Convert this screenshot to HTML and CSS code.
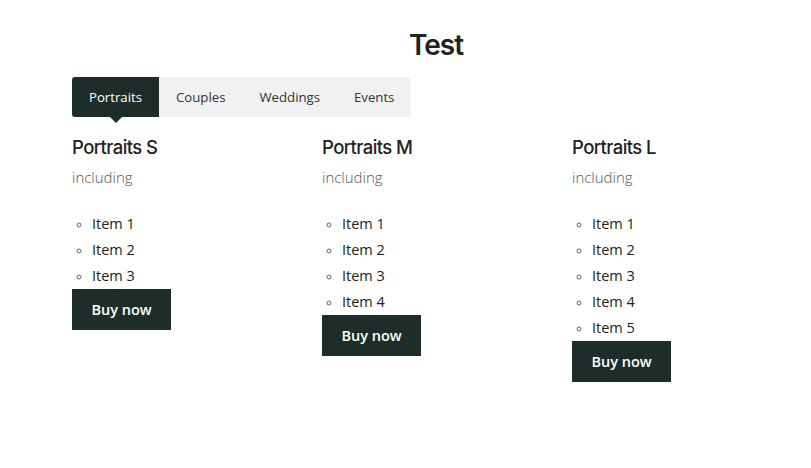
FILE: index.html
```html
<!DOCTYPE html>
<html lang="en">
<head>
  <meta charset="UTF-8" />
  <meta name="viewport" content="width=device-width, initial-scale=1.0"/>
  <title>Test</title>
  <link rel="stylesheet" href="styles.css">
</head>
<body>

  <div class="page">
    <h1 class="title">Test</h1>

    <!-- Tabs -->
    <div class="tabs">
      <a href="#" class="tab active">Portraits</a>
      <a href="#" class="tab">Couples</a>
      <a href="#" class="tab">Weddings</a>
      <a href="#" class="tab">Events</a>
    </div>

    <!-- Packages -->
    <div class="packages">
      <div class="package">
        <h2>Portraits S</h2>
        <p class="sub">including</p>
        <ul>
          <li>Item 1</li>
          <li>Item 2</li>
          <li>Item 3</li>
        </ul>
        <a href="#" class="buy-btn">Buy now</a>
      </div>

      <div class="package">
        <h2>Portraits M</h2>
        <p class="sub">including</p>
        <ul>
          <li>Item 1</li>
          <li>Item 2</li>
          <li>Item 3</li>
          <li>Item 4</li>
        </ul>
        <a href="#" class="buy-btn">Buy now</a>
      </div>

      <div class="package">
        <h2>Portraits L</h2>
        <p class="sub">including</p>
        <ul>
          <li>Item 1</li>
          <li>Item 2</li>
          <li>Item 3</li>
          <li>Item 4</li>
          <li>Item 5</li>
        </ul>
        <a href="#" class="buy-btn">Buy now</a>
      </div>
    </div>
  </div>

</body>
</html>
```

FILE: styles.css
```css
body {
  margin: 0;
  font-family: "Open Sans", Arial, sans-serif;
  background-color: #fff;
  color: #222;
}

.page {
  padding: 0 11px 0 72px;
}

.title {
  margin: 0;
  padding-top: 27px;
  text-align: center;
  font-family: Inter, Lato, sans-serif;
  font-size: 28px;
  font-weight: 600;
  line-height: 36px;
  color: #222;
  letter-spacing: -1px;
}

.tabs {
  display: inline-flex;
  margin-top: 14px;
  background-color: #f1f1f1;
  border-radius: 3px;
}

.tab {
  position: relative;
  display: block;
  padding: 0 17px;
  height: 40px;
  line-height: 40px;
  font-size: 13.2px;
  color: #333;
  text-decoration: none;
}

.tab.active {
  background-color: #1d2e2a;
  color: #fff;
  border-radius: 3px 0 0 3px;
}

.tab.active::after {
  content: "";
  position: absolute;
  left: 50%;
  bottom: -6px;
  margin-left: -6px;
  border-left: 6px solid transparent;
  border-right: 6px solid transparent;
  border-top: 6px solid #1d2e2a;
}

.packages {
  display: grid;
  grid-template-columns: 250px 250px 250px;
  margin-top: 17px;
}

.package h2 {
  margin: 0;
  font-family: Inter, Lato, sans-serif;
  font-size: 18.5px;
  font-weight: 500;
  line-height: 26px;
  letter-spacing: -0.6px;
  color: #222;
}

.sub {
  margin: 6px 0 0;
  font-size: 15px;
  font-weight: 300;
  color: #555;
  line-height: 22px;
}

.package ul {
  margin: 23px 0 0;
  padding-left: 20px;
  list-style: circle;
}

.package li {
  font-size: 14.5px;
  line-height: 26px;
}

.package li::marker {
  color: #666;
  font-size: 11px;
}

.buy-btn {
  display: inline-block;
  width: 99px;
  height: 41px;
  line-height: 41px;
  text-align: center;
  background-color: #1d2e2a;
  color: #fff;
  font-size: 14.5px;
  font-weight: 600;
  text-decoration: none;
}
```
